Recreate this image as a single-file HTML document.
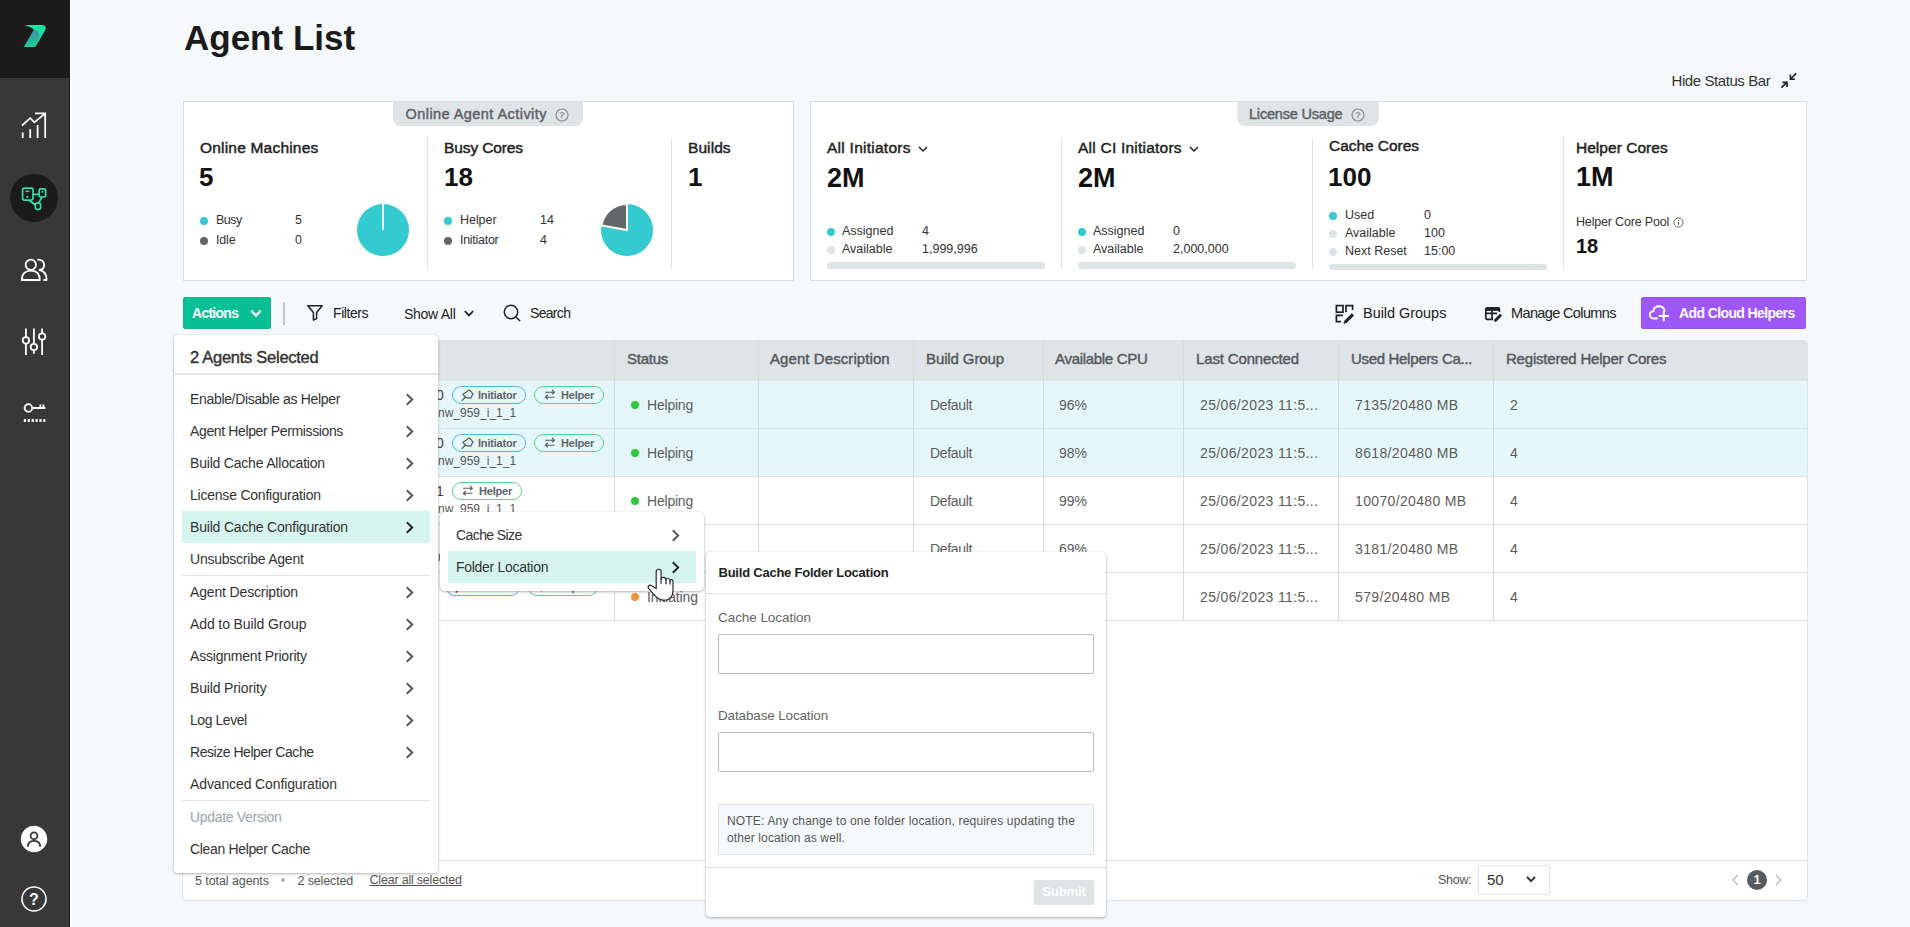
<!DOCTYPE html>
<html lang="en">
<head>
<meta charset="utf-8">
<title>Agent List</title>
<style>
*{box-sizing:border-box;margin:0;padding:0}
html,body{width:1910px;height:927px;overflow:hidden}
body{background:#f5f9fb;font-family:"Liberation Sans",sans-serif;color:#222;position:relative;font-size:14px}
.a{position:absolute}
.t{position:absolute;white-space:nowrap;line-height:20px;height:20px}
svg{display:block}
/* sidebar */
#side{left:0;top:0;width:70px;height:927px;background:#383838;border-right:1px solid #151515;box-shadow:1px 0 0 #fff}
#logo{left:0;top:0;width:70px;height:78px;background:#1b1b1b}
#active{left:10px;top:174px;width:48px;height:48px;border-radius:50%;background:#1b1b1b}
/* title */
#title{left:184px;top:15.5px;font-size:35px;font-weight:bold;line-height:44px;height:44px;color:#1a1a1a;letter-spacing:0}
/* panels */
.panel{position:absolute;background:#fff;border:1px solid #d9dfe3;top:101px;height:180px}
.tab{position:absolute;top:-1px;height:25px;background:#dfe4e7;border-radius:0 0 8px 8px;color:#5c6267;font-weight:normal;-webkit-text-stroke:.45px #5c6267;font-size:14.5px;line-height:26px;white-space:nowrap}
.vd{position:absolute;width:1px;background:#dde3e7;top:138px;height:131px}
.h1{font-size:15.5px;font-weight:normal;-webkit-text-stroke:.45px #222;color:#222}
.big{font-size:26px;font-weight:bold;color:#111;line-height:30px;height:30px}
.lg{font-size:12.5px;color:#333}
.dot{position:absolute;width:8px;height:8px;border-radius:50%}
.teal{background:#33cad0}.gray{background:#666}.lgray{background:#dfe4e7}
.bar{position:absolute;height:7px;border-radius:4px;background:#dfe4e7}

/* toolbar */
.tb{font-size:14px;color:#222}
#actions{left:183px;top:297px;width:88px;height:32px;background:#06bf94;border:1px solid #17b48c;border-radius:2px}
#cloud{left:1641px;top:297px;width:165px;height:32px;background:#9e58fa;border:1px solid #9256ec;border-radius:2px}
/* table */
#table{left:182px;top:340px;width:1626px;height:561px;background:#fff;border:1px solid #dde3e7;border-radius:4px}
#thead{left:183px;top:340px;width:1624px;height:41px;background:#dfe4e7;border-radius:3px 3px 0 0}
.th{font-size:15px;font-weight:normal;-webkit-text-stroke:.45px #565b5f;color:#565b5f;top:349px}
.row{position:absolute;left:183px;width:1624px;height:48px;border-bottom:1px solid #dde3e7}
.sel{background:#e6f7fb}
.cs{position:absolute;width:1px;top:340px;height:281px;background:#d5dce0}
.td{font-size:14px;color:#5c5c5c}
.pill{letter-spacing:-.2px;position:absolute;height:18px;border-radius:9px;border:1px solid;font-size:11px;font-weight:bold;color:#5e6469;line-height:16px;white-space:nowrap}
.pi{border-color:#58b4dd}.ph{border-color:#5dd489}
.sdot{position:absolute;width:8px;height:8px;border-radius:50%;background:#2bc93c}
.ft{font-size:12.5px;color:#555}

/* menus */
.pop{position:absolute;background:#fff;border-radius:4px;box-shadow:0 1px 3px rgba(0,0,0,.3),0 0 1px rgba(0,0,0,.1)}
.mi{font-size:14px;color:#333}
.hl{position:absolute;background:#d6f5ee}
.sep{position:absolute;height:1px;background:#dde3e7}
.inp{position:absolute;left:718px;width:376px;height:40px;border:1px solid #b9bec1;border-radius:2px;background:#fff}
</style>
</head>
<body>

<!-- ============ SIDEBAR ============ -->
<div id="side" class="a">
  <div id="logo" class="a"></div>
  <svg class="a" style="left:22px;top:22px" width="28" height="28" viewBox="0 0 28 28"><defs><linearGradient id="lg1" x1="0" y1="0" x2="0" y2="1"><stop offset="0" stop-color="#12e6a0"/><stop offset="1" stop-color="#1ec79a"/></linearGradient><linearGradient id="lg2" x1="0" y1="0" x2="0" y2="1"><stop offset="0" stop-color="#3f86a0" stop-opacity=".95"/><stop offset=".55" stop-color="#3a93a0" stop-opacity=".6"/><stop offset="1" stop-color="#22c79c" stop-opacity="0"/></linearGradient></defs><path d="M1.8 3 H19.6 C23.4 3 24.6 5.6 23.3 8 L13.4 24.9 H1.9 L12 7.8 C9.6 5.4 5.6 3.6 1.8 3 Z" fill="url(#lg1)"/><path d="M12 7.8 C14.6 8 16.8 10 17.6 12.8 L13.4 24.9 H1.9 Z" fill="url(#lg2)"/></svg>
  <!-- chart -->
  <svg class="a" style="left:20px;top:111px" width="28" height="28" viewBox="0 0 28 28"><path d="M2.7 27 V21.5 M10.2 27 V18.2 M17.6 27 V14 M25.2 27 V2.4 H15 M2 14.5 L10.2 7.2 L14.4 11.4 L25 2.6" fill="none" stroke="#fff" stroke-width="1.8"/></svg>
  <div id="active" class="a"></div>
  <!-- agents (active) -->
  <svg class="a" style="left:20px;top:186px" width="28" height="26" viewBox="0 0 28 26"><g fill="none" stroke="#2ee0a6" stroke-width="1.7" stroke-linejoin="round"><rect x="2.6" y="2.2" width="10.4" height="12" rx="1.6"/><rect x="19.2" y="2.8" width="6.4" height="8.2" rx="1.4"/><rect x="15.4" y="17.2" width="5.2" height="6.2" rx="1.3"/><path d="M13 8.4 H19.2 M9 14.2 L15.4 19 M22 11 L18.6 17.2"/><path d="M5.4 5.4 H9.4" stroke-width="1.4"/></g><rect x="6.4" y="10" width="1.8" height="1.8" fill="#2ee0a6"/><rect x="21.6" y="5" width="1.6" height="1.6" fill="#2ee0a6"/></svg>
  <!-- users -->
  <svg class="a" style="left:20px;top:257px" width="30" height="26" viewBox="0 0 30 26"><g fill="none" stroke="#fff" stroke-width="1.8" stroke-linejoin="round"><circle cx="10.8" cy="7.8" r="5.2"/><path d="M1.8 23 C1.8 16.6 5.6 13.6 10.8 13.6 C16 13.6 19.8 16.6 19.8 23 Z"/><path d="M17.4 2.8 C21.6 2.2 24.2 5 24.2 7.8 C24.2 10.4 22.4 12.6 19.6 13 C24 14 26.6 17.4 26.6 23 H23.4"/></g></svg>
  <!-- sliders -->
  <svg class="a" style="left:20px;top:327px" width="28" height="30" viewBox="0 0 28 30"><g fill="none" stroke="#fff" stroke-width="1.8"><path d="M5.9 1.5 V10.2 M5.9 16.6 V28 M13.9 1.5 V16.8 M13.9 23.2 V26.8 M22.1 1.5 V6.3 M22.1 12.7 V28"/><circle cx="5.9" cy="13.4" r="3.2"/><circle cx="13.9" cy="20" r="3.2"/><circle cx="22.1" cy="9.5" r="3.2"/></g></svg>
  <!-- key -->
  <svg class="a" style="left:22px;top:402px" width="26" height="22" viewBox="0 0 26 22"><g fill="none" stroke="#fff" stroke-width="1.8"><circle cx="6.4" cy="6" r="3.8"/><path d="M10.2 6 H23.4 M18.4 6 V2.6 M21.4 6 V2.6"/></g><path d="M1.8 18.4 H23.4" stroke="#fff" stroke-width="3" stroke-dasharray="2.2 1.7"/></svg>
  <!-- avatar -->
  <svg class="a" style="left:20px;top:825px" width="28" height="28" viewBox="0 0 28 28"><circle cx="14" cy="14" r="13.2" fill="#fff"/><g fill="none" stroke="#333" stroke-width="1.7"><circle cx="14" cy="10.8" r="3.4"/><path d="M7.8 21.8 C7.8 17.6 10.4 15.8 14 15.8 C17.6 15.8 20.2 17.6 20.2 21.8"/></g></svg>
  <!-- help -->
  <svg class="a" style="left:20px;top:885px" width="28" height="28" viewBox="0 0 28 28"><circle cx="14" cy="14" r="12" fill="none" stroke="#fff" stroke-width="1.6"/><text x="14" y="19.6" font-size="16" font-weight="bold" text-anchor="middle" fill="#fff" font-family="Liberation Sans, sans-serif">?</text></svg>
</div>

<!-- ============ TITLE ============ -->
<div id="title" class="t">Agent List</div>
<div class="t" style="left:1671.5px;top:71px;font-size:15px;color:#333;letter-spacing:-0.42px">Hide Status Bar</div>

<!-- ============ PANEL 1 ============ -->
<div class="panel" style="left:183px;width:611px"></div>
<div class="tab" style="left:393px;top:101px;width:190px;padding-left:12.5px;letter-spacing:0.44px">Online Agent Activity</div>
<svg class="a" style="left:555px;top:108px" width="14" height="14" viewBox="0 0 14 14"><circle cx="7" cy="7" r="6" fill="none" stroke="#8a9094" stroke-width="1.2"/><text x="7" y="10.2" font-size="9" font-weight="bold" text-anchor="middle" fill="#8a9094" font-family="Liberation Sans, sans-serif">?</text></svg>

<div class="t h1" style="left:200px;top:138px;letter-spacing:0.2px">Online Machines</div>
<div class="t big" style="left:199px;top:162px">5</div>
<div class="dot teal" style="left:200px;top:217px"></div>
<div class="t lg" style="left:216px;top:210px;letter-spacing:-0.5px">Busy</div>
<div class="t lg" style="left:295px;top:210px">5</div>
<div class="dot gray" style="left:200px;top:237px"></div>
<div class="t lg" style="left:216px;top:230px;letter-spacing:-0.16px">Idle</div>
<div class="t lg" style="left:295px;top:230px">0</div>
<svg class="a" style="left:356px;top:203px" width="54" height="54" viewBox="-27 -27 54 54"><circle r="26" fill="#33cad0"/><line x1="0" y1="0" x2="0" y2="-27" stroke="#fff" stroke-width="1.8"/></svg>
<div class="vd" style="left:427px"></div>

<div class="t h1" style="left:444px;top:138px;letter-spacing:-0.11px">Busy Cores</div>
<div class="t big" style="left:444px;top:162px">18</div>
<div class="dot teal" style="left:444px;top:217px"></div>
<div class="t lg" style="left:460px;top:210px;letter-spacing:-0.05px">Helper</div>
<div class="t lg" style="left:540px;top:210px">14</div>
<div class="dot gray" style="left:444px;top:237px"></div>
<div class="t lg" style="left:460px;top:230px;letter-spacing:-0.28px">Initiator</div>
<div class="t lg" style="left:540px;top:230px">4</div>
<svg class="a" style="left:600px;top:203px" width="54" height="54" viewBox="-27 -27 54 54"><circle r="26" fill="#33cad0"/><path d="M0 0 L0 -26 A26 26 0 0 0 -25.6 -4.6 Z" fill="#62676a" stroke="#fff" stroke-width="2" stroke-linejoin="miter"/></svg>
<div class="vd" style="left:671px"></div>

<div class="t h1" style="left:688px;top:138px;letter-spacing:0.08px">Builds</div>
<div class="t big" style="left:688px;top:162px">1</div>

<!-- ============ PANEL 2 ============ -->
<div class="panel" style="left:810px;width:997px"></div>
<div class="tab" style="left:1237px;top:101px;width:142px;padding-left:12px;letter-spacing:-0.19px">License Usage</div>
<svg class="a" style="left:1351px;top:108px" width="14" height="14" viewBox="0 0 14 14"><circle cx="7" cy="7" r="6" fill="none" stroke="#8a9094" stroke-width="1.2"/><text x="7" y="10.2" font-size="9" font-weight="bold" text-anchor="middle" fill="#8a9094" font-family="Liberation Sans, sans-serif">?</text></svg>

<div class="t h1" style="left:827px;top:138px;letter-spacing:0.26px">All Initiators</div>
<svg class="a" style="left:918px;top:145px" width="10" height="8" viewBox="0 0 10 8"><path d="M1 2 L5 6 L9 2" fill="none" stroke="#222" stroke-width="1.5"/></svg>
<div class="t big" style="left:827px;top:163px;font-size:27px">2M</div>
<div class="dot teal" style="left:827px;top:228px"></div>
<div class="t lg" style="left:842px;top:221px">Assigned</div>
<div class="t lg" style="left:922px;top:221px">4</div>
<div class="dot lgray" style="left:827px;top:246px"></div>
<div class="t lg" style="left:842px;top:239px">Available</div>
<div class="t lg" style="left:922px;top:239px">1,999,996</div>
<div class="bar" style="left:827px;top:262px;width:218px"></div>
<div class="vd" style="left:1061px"></div>

<div class="t h1" style="left:1078px;top:138px;letter-spacing:0.23px">All CI Initiators</div>
<svg class="a" style="left:1189px;top:145px" width="10" height="8" viewBox="0 0 10 8"><path d="M1 2 L5 6 L9 2" fill="none" stroke="#222" stroke-width="1.5"/></svg>
<div class="t big" style="left:1078px;top:163px;font-size:27px">2M</div>
<div class="dot teal" style="left:1078px;top:228px"></div>
<div class="t lg" style="left:1093px;top:221px">Assigned</div>
<div class="t lg" style="left:1173px;top:221px">0</div>
<div class="dot lgray" style="left:1078px;top:246px"></div>
<div class="t lg" style="left:1093px;top:239px">Available</div>
<div class="t lg" style="left:1173px;top:239px">2,000,000</div>
<div class="bar" style="left:1078px;top:262px;width:218px"></div>
<div class="vd" style="left:1312px"></div>

<div class="t h1" style="left:1329px;top:136px;letter-spacing:-0.04px">Cache Cores</div>
<div class="t big" style="left:1328px;top:162px">100</div>
<div class="dot teal" style="left:1329px;top:212px"></div>
<div class="t lg" style="left:1345px;top:205px">Used</div>
<div class="t lg" style="left:1424px;top:205px">0</div>
<div class="dot lgray" style="left:1329px;top:230px"></div>
<div class="t lg" style="left:1345px;top:223px">Available</div>
<div class="t lg" style="left:1424px;top:223px">100</div>
<div class="dot lgray" style="left:1329px;top:248px"></div>
<div class="t lg" style="left:1345px;top:241px">Next Reset</div>
<div class="t lg" style="left:1424px;top:241px">15:00</div>
<div class="bar" style="left:1329px;top:264px;width:218px;height:6px"></div>
<div class="vd" style="left:1563px"></div>

<div class="t h1" style="left:1576px;top:138px;letter-spacing:0.03px">Helper Cores</div>
<div class="t big" style="left:1576px;top:162px;font-size:27px">1M</div>
<div class="t" style="left:1576px;top:212px;font-size:12.5px;color:#333;letter-spacing:-0.17px">Helper Core Pool</div>
<svg class="a" style="left:1673px;top:217px" width="11" height="11" viewBox="0 0 11 11"><circle cx="5.5" cy="5.5" r="4.6" fill="none" stroke="#555" stroke-width="0.9"/><line x1="5.5" y1="4.8" x2="5.5" y2="8" stroke="#555" stroke-width="1"/><circle cx="5.5" cy="3.3" r=".6" fill="#555"/></svg>
<div class="t" style="left:1576px;top:234px;font-size:20px;font-weight:bold;line-height:24px;height:24px;color:#111">18</div>

<!-- ============ TOOLBAR ============ -->
<div id="actions" class="a"></div>
<div class="t" style="left:192px;top:303px;font-size:14px;font-weight:bold;color:#fff;letter-spacing:-0.73px">Actions</div>
<svg class="a" style="left:249px;top:308px" width="14" height="11" viewBox="0 0 14 11"><path d="M2.2 2.6 L7 7.6 L11.8 2.6" fill="none" stroke="#fff" stroke-width="2.3"/></svg>
<div class="a" style="left:283px;top:302px;width:2px;height:23px;background:#c3c8cb"></div>
<svg class="a" style="left:306px;top:304px" width="18" height="18" viewBox="0 0 18 18"><path d="M1.8 1.8 H16.2 L10.6 8.6 V14.6 L7.4 16 V8.6 Z" fill="none" stroke="#222" stroke-width="1.5" stroke-linejoin="round"/></svg>
<div class="t tb" style="left:333px;top:303px;letter-spacing:-0.42px">Filters</div>
<div class="t tb" style="left:404px;top:304px;letter-spacing:-0.28px">Show All</div>
<svg class="a" style="left:463px;top:309px" width="12" height="9" viewBox="0 0 12 9"><path d="M1.8 2 L6 6.4 L10.2 2" fill="none" stroke="#222" stroke-width="1.8"/></svg>
<svg class="a" style="left:502px;top:303px" width="20" height="20" viewBox="0 0 20 20"><circle cx="9" cy="9" r="6.7" fill="none" stroke="#222" stroke-width="1.5"/><line x1="13.8" y1="13.8" x2="18" y2="18" stroke="#222" stroke-width="1.6"/></svg>
<div class="t tb" style="left:530px;top:303px;letter-spacing:-0.68px">Search</div>

<div class="t tb" style="left:1363px;top:303px;font-size:14.5px;letter-spacing:-0.04px">Build Groups</div>
<div class="t tb" style="left:1511px;top:303px;font-size:14.5px;letter-spacing:-0.63px">Manage Columns</div>
<div id="cloud" class="a"></div>
<svg class="a" style="left:1334px;top:303px" width="22" height="22" viewBox="0 0 22 22"><g fill="none" stroke="#222" stroke-width="1.7"><rect x="2.4" y="2.6" width="6.6" height="6.6"/><path d="M12 9.2 V2.6 H18.6 V7"/><path d="M9 12.4 H2.4 V18.6 H7"/></g><path d="M11.2 19.2 L19 11.4" stroke="#222" stroke-width="3.2" stroke-linecap="butt"/><path d="M10 20.4 L11.6 18.8" stroke="#222" stroke-width="2"/></svg>
<svg class="a" style="left:1484px;top:305px" width="20" height="19" viewBox="0 0 20 19"><g fill="none" stroke="#222" stroke-width="1.7" stroke-linejoin="round"><path d="M15.4 7 V4.2 C15.4 3.4 14.8 2.8 14 2.8 H3.2 C2.4 2.8 1.8 3.4 1.8 4.2 V13 C1.8 13.8 2.4 14.4 3.2 14.4 H9"/><path d="M1.8 8.4 H13 M8 5 V14.4"/></g><path d="M1.8 4.4 H15.4" stroke="#222" stroke-width="3"/><path d="M10.6 16.2 L17 9.8" stroke="#222" stroke-width="2.8"/></svg>
<svg class="a" style="left:1647px;top:303px" width="24" height="20" viewBox="0 0 24 20"><g fill="none" stroke="#fff" stroke-width="2" stroke-linecap="round" stroke-linejoin="round"><path d="M10 15.4 H6.6 C4.4 15.4 2.8 13.8 2.8 11.8 C2.8 9.8 4.4 8.2 6.4 8.2 C6.8 5.2 9.2 3.2 12 3.2 C14.8 3.2 17 5 17.6 7.6"/><path d="M16.8 8.6 V17.4 M12.4 13 H21.2"/></g></svg>
<svg class="a" style="left:1780px;top:72px" width="18" height="18" viewBox="0 0 18 18"><g fill="none" stroke="#222" stroke-width="1.6"><path d="M16.2 1.4 L10.4 7.2 M10.4 2.6 V7.2 H15"/><path d="M1.4 15.6 L7 10.4 M2.4 10.4 H7 V15"/></g></svg>

<div class="t" style="left:1679px;top:303px;font-size:14px;font-weight:bold;color:#fff;letter-spacing:-0.61px">Add Cloud Helpers</div>

<!-- ============ TABLE ============ -->
<div id="table" class="a"></div>
<div id="thead" class="a"></div>
<div class="row sel" style="top:381px"></div>
<div class="row sel" style="top:429px"></div>
<div class="row" style="top:477px"></div>
<div class="row" style="top:525px"></div>
<div class="row" style="top:573px"></div>
<div class="cs" style="left:614px"></div>
<div class="cs" style="left:758px"></div>
<div class="cs" style="left:913px"></div>
<div class="cs" style="left:1043px"></div>
<div class="cs" style="left:1183px"></div>
<div class="cs" style="left:1338px"></div>
<div class="cs" style="left:1493px"></div>
<div class="t th" style="left:627px;letter-spacing:-0.26px">Status</div>
<div class="t th" style="left:770px;letter-spacing:0.08px">Agent Description</div>
<div class="t th" style="left:926px;letter-spacing:-0.11px">Build Group</div>
<div class="t th" style="left:1055px;letter-spacing:-0.3px">Available CPU</div>
<div class="t th" style="left:1196px;letter-spacing:-0.15px">Last Connected</div>
<div class="t th" style="left:1351px;letter-spacing:-0.32px">Used Helpers Ca...</div>
<div class="t th" style="left:1506px;letter-spacing:-0.21px">Registered Helper Cores</div>

<!-- row 381 -->
<div class="t td" style="left:436px;top:385px;font-size:14px;color:#444">0</div>
<div class="pill pi" style="left:452px;top:386px;width:74px;padding-left:25px"><svg class="a" style="left:8px;top:2px" width="13" height="13" viewBox="0 0 13 13"><path d="M8.4 0.9 L12 4.8 L9.7 9.2 L4.5 8.6 L1.9 5.2 Z M4.6 8 L1.2 11.3" fill="none" stroke="#565b5f" stroke-width="1.25" stroke-linejoin="round" stroke-linecap="round"/></svg>Initiator</div>
<div class="pill ph" style="left:534px;top:386px;width:70px;padding-left:26px"><svg class="a" style="left:9px;top:2px" width="12" height="12" viewBox="0 0 12 12"><path d="M1.2 3.2 H10.2 M8 1 L10.4 3.2 L8 5.4 M10.4 8.2 H1.4 M3.8 6 L1.4 8.2 L3.8 10.4" fill="none" stroke="#565b5f" stroke-width="1.15"/></svg>Helper</div>
<div class="t td" style="left:438px;top:403px;font-size:12px;color:#555">nw_959_i_1_1</div>
<div class="sdot" style="left:631px;top:401px;background:#2bc93c"></div>
<div class="t td" style="left:647px;top:395px;letter-spacing:-0.21px">Helping</div>
<div class="t td" style="left:930px;top:395px;letter-spacing:-0.31px">Default</div>
<div class="t td" style="left:1059px;top:395px">96%</div>
<div class="t td" style="left:1200px;top:395px;letter-spacing:0.36px">25/06/2023 11:5...</div>
<div class="t td" style="left:1355px;top:395px;letter-spacing:0.36px">7135/20480 MB</div>
<div class="t td" style="left:1510px;top:395px">2</div>

<!-- row 429 -->
<div class="t td" style="left:436px;top:433px;font-size:14px;color:#444">0</div>
<div class="pill pi" style="left:452px;top:434px;width:74px;padding-left:25px"><svg class="a" style="left:8px;top:2px" width="13" height="13" viewBox="0 0 13 13"><path d="M8.4 0.9 L12 4.8 L9.7 9.2 L4.5 8.6 L1.9 5.2 Z M4.6 8 L1.2 11.3" fill="none" stroke="#565b5f" stroke-width="1.25" stroke-linejoin="round" stroke-linecap="round"/></svg>Initiator</div>
<div class="pill ph" style="left:534px;top:434px;width:70px;padding-left:26px"><svg class="a" style="left:9px;top:2px" width="12" height="12" viewBox="0 0 12 12"><path d="M1.2 3.2 H10.2 M8 1 L10.4 3.2 L8 5.4 M10.4 8.2 H1.4 M3.8 6 L1.4 8.2 L3.8 10.4" fill="none" stroke="#565b5f" stroke-width="1.15"/></svg>Helper</div>
<div class="t td" style="left:438px;top:451px;font-size:12px;color:#555">nw_959_i_1_1</div>
<div class="sdot" style="left:631px;top:449px;background:#2bc93c"></div>
<div class="t td" style="left:647px;top:443px;letter-spacing:-0.21px">Helping</div>
<div class="t td" style="left:930px;top:443px;letter-spacing:-0.31px">Default</div>
<div class="t td" style="left:1059px;top:443px">98%</div>
<div class="t td" style="left:1200px;top:443px;letter-spacing:0.36px">25/06/2023 11:5...</div>
<div class="t td" style="left:1355px;top:443px;letter-spacing:0.36px">8618/20480 MB</div>
<div class="t td" style="left:1510px;top:443px">4</div>

<!-- row 477 -->
<div class="t td" style="left:436px;top:481px;font-size:14px;color:#444">1</div>
<div class="pill ph" style="left:452px;top:482px;width:70px;padding-left:26px"><svg class="a" style="left:9px;top:2px" width="12" height="12" viewBox="0 0 12 12"><path d="M1.2 3.2 H10.2 M8 1 L10.4 3.2 L8 5.4 M10.4 8.2 H1.4 M3.8 6 L1.4 8.2 L3.8 10.4" fill="none" stroke="#565b5f" stroke-width="1.15"/></svg>Helper</div>
<div class="t td" style="left:438px;top:499px;font-size:12px;color:#555">nw_959_i_1_1</div>
<div class="sdot" style="left:631px;top:497px;background:#2bc93c"></div>
<div class="t td" style="left:647px;top:491px;letter-spacing:-0.21px">Helping</div>
<div class="t td" style="left:930px;top:491px;letter-spacing:-0.31px">Default</div>
<div class="t td" style="left:1059px;top:491px">99%</div>
<div class="t td" style="left:1200px;top:491px;letter-spacing:0.36px">25/06/2023 11:5...</div>
<div class="t td" style="left:1355px;top:491px;letter-spacing:0.35px">10070/20480 MB</div>
<div class="t td" style="left:1510px;top:491px">4</div>

<!-- row 525 -->
<div class="pill pi" style="left:452px;top:530px;width:74px;padding-left:25px"><svg class="a" style="left:8px;top:2px" width="13" height="13" viewBox="0 0 13 13"><path d="M8.4 0.9 L12 4.8 L9.7 9.2 L4.5 8.6 L1.9 5.2 Z M4.6 8 L1.2 11.3" fill="none" stroke="#565b5f" stroke-width="1.25" stroke-linejoin="round" stroke-linecap="round"/></svg>Initiator</div>
<div class="pill ph" style="left:534px;top:530px;width:70px;padding-left:26px"><svg class="a" style="left:9px;top:2px" width="12" height="12" viewBox="0 0 12 12"><path d="M1.2 3.2 H10.2 M8 1 L10.4 3.2 L8 5.4 M10.4 8.2 H1.4 M3.8 6 L1.4 8.2 L3.8 10.4" fill="none" stroke="#565b5f" stroke-width="1.15"/></svg>Helper</div>
<div class="t td" style="left:438px;top:547px;font-size:12px;color:#555">nw_959_i_1_1</div>
<div class="sdot" style="left:631px;top:545px;background:#2bc93c"></div>
<div class="t td" style="left:647px;top:539px;letter-spacing:-0.21px">Helping</div>
<div class="t td" style="left:930px;top:539px;letter-spacing:-0.31px">Default</div>
<div class="t td" style="left:1059px;top:539px">69%</div>
<div class="t td" style="left:1200px;top:539px;letter-spacing:0.36px">25/06/2023 11:5...</div>
<div class="t td" style="left:1355px;top:539px;letter-spacing:0.36px">3181/20480 MB</div>
<div class="t td" style="left:1510px;top:539px">4</div>

<!-- row 573 -->
<div class="pill pi" style="left:446px;top:578px;width:74px;padding-left:25px"><svg class="a" style="left:8px;top:2px" width="13" height="13" viewBox="0 0 13 13"><path d="M8.4 0.9 L12 4.8 L9.7 9.2 L4.5 8.6 L1.9 5.2 Z M4.6 8 L1.2 11.3" fill="none" stroke="#565b5f" stroke-width="1.25" stroke-linejoin="round" stroke-linecap="round"/></svg>Initiator</div>
<div class="pill ph" style="left:528px;top:578px;width:70px;padding-left:26px"><svg class="a" style="left:9px;top:2px" width="12" height="12" viewBox="0 0 12 12"><path d="M1.2 3.2 H10.2 M8 1 L10.4 3.2 L8 5.4 M10.4 8.2 H1.4 M3.8 6 L1.4 8.2 L3.8 10.4" fill="none" stroke="#565b5f" stroke-width="1.15"/></svg>Helper</div>
<div class="sdot" style="left:631px;top:593px;background:#f5923e"></div>
<div class="t td" style="left:647px;top:587px;letter-spacing:-0.12px">Initiating</div>
<div class="t td" style="left:930px;top:587px;letter-spacing:-0.31px">Default</div>
<div class="t td" style="left:1059px;top:587px">100%</div>
<div class="t td" style="left:1200px;top:587px;letter-spacing:0.36px">25/06/2023 11:5...</div>
<div class="t td" style="left:1355px;top:587px;letter-spacing:0.36px">579/20480 MB</div>
<div class="t td" style="left:1510px;top:587px">4</div>

<!-- footer -->
<div class="a" style="left:183px;top:860px;width:1624px;height:1px;background:#dde3e7"></div>
<div class="t ft" style="left:195px;top:871px;letter-spacing:-0.08px">5 total agents</div>
<div class="a" style="left:281px;top:878px;width:4px;height:4px;border-radius:50%;background:#aab0b4"></div>
<div class="t ft" style="left:297.5px;top:871px;letter-spacing:-0.14px">2 selected</div>
<div class="t ft" style="left:369.5px;top:870px;text-decoration:underline;letter-spacing:-0.2px">Clear all selected</div>
<div class="t ft" style="left:1438px;top:870px;letter-spacing:-0.25px">Show:</div>
<div class="a" style="left:1478px;top:865px;width:72px;height:30px;border:1px solid #dde3e7;border-radius:3px;background:#fff"></div>
<div class="t" style="left:1487px;top:870px;font-size:15px;color:#333">50</div>
<svg class="a" style="left:1525px;top:875px" width="12" height="9" viewBox="0 0 12 9"><path d="M2 2 L6 6.2 L10 2" fill="none" stroke="#333" stroke-width="1.9"/></svg>
<svg class="a" style="left:1731px;top:874px" width="9" height="12" viewBox="0 0 9 12"><path d="M7 1 L2 6 L7 11" fill="none" stroke="#b4babd" stroke-width="1.3"/></svg>
<div class="a" style="left:1747px;top:870px;width:20px;height:20px;border-radius:50%;background:#565b5f"></div>
<div class="t" style="left:1747px;top:870px;width:20px;text-align:center;font-size:13px;font-weight:bold;color:#fff">1</div>
<svg class="a" style="left:1774px;top:874px" width="9" height="12" viewBox="0 0 9 12"><path d="M2 1 L7 6 L2 11" fill="none" stroke="#b4babd" stroke-width="1.3"/></svg>

<!-- ============ ACTIONS MENU ============ -->
<div class="pop" style="left:174px;top:335px;width:264px;height:538px"></div>
<div class="t" style="left:190px;top:347px;font-size:16.5px;font-weight:normal;-webkit-text-stroke:.4px #333;color:#333;letter-spacing:-0.27px">2 Agents Selected</div>
<div class="sep" style="left:174px;top:373px;width:264px;height:2px;background:#dfe4e7"></div>
<div class="hl" style="left:182px;top:511px;width:248px;height:32px"></div>
<div class="sep" style="left:182px;top:575px;width:248px"></div>
<div class="sep" style="left:182px;top:800px;width:248px"></div>
<div class="t mi" style="left:190px;top:389px;color:#333;letter-spacing:-0.33px">Enable/Disable as Helper</div>
<svg class="a" style="left:405px;top:393px" width="9" height="13" viewBox="0 0 9 13"><path d="M1.8 1.2 L7.2 6.5 L1.8 11.8" fill="none" stroke="#555" stroke-width="1.9"/></svg>
<div class="t mi" style="left:190px;top:421px;color:#333;letter-spacing:-0.37px">Agent Helper Permissions</div>
<svg class="a" style="left:405px;top:425px" width="9" height="13" viewBox="0 0 9 13"><path d="M1.8 1.2 L7.2 6.5 L1.8 11.8" fill="none" stroke="#555" stroke-width="1.9"/></svg>
<div class="t mi" style="left:190px;top:453px;color:#333;letter-spacing:-0.2px">Build Cache Allocation</div>
<svg class="a" style="left:405px;top:457px" width="9" height="13" viewBox="0 0 9 13"><path d="M1.8 1.2 L7.2 6.5 L1.8 11.8" fill="none" stroke="#555" stroke-width="1.9"/></svg>
<div class="t mi" style="left:190px;top:485px;color:#333;letter-spacing:-0.22px">License Configuration</div>
<svg class="a" style="left:405px;top:489px" width="9" height="13" viewBox="0 0 9 13"><path d="M1.8 1.2 L7.2 6.5 L1.8 11.8" fill="none" stroke="#555" stroke-width="1.9"/></svg>
<div class="t mi" style="left:190px;top:517px;color:#333;letter-spacing:-0.19px">Build Cache Configuration</div>
<svg class="a" style="left:405px;top:521px" width="9" height="13" viewBox="0 0 9 13"><path d="M1.8 1.2 L7.2 6.5 L1.8 11.8" fill="none" stroke="#222" stroke-width="1.9"/></svg>
<div class="t mi" style="left:190px;top:549px;color:#333;letter-spacing:-0.23px">Unsubscribe Agent</div>
<div class="t mi" style="left:190px;top:582px;color:#333;letter-spacing:-0.15px">Agent Description</div>
<svg class="a" style="left:405px;top:586px" width="9" height="13" viewBox="0 0 9 13"><path d="M1.8 1.2 L7.2 6.5 L1.8 11.8" fill="none" stroke="#555" stroke-width="1.9"/></svg>
<div class="t mi" style="left:190px;top:614px;color:#333;letter-spacing:-0.11px">Add to Build Group</div>
<svg class="a" style="left:405px;top:618px" width="9" height="13" viewBox="0 0 9 13"><path d="M1.8 1.2 L7.2 6.5 L1.8 11.8" fill="none" stroke="#555" stroke-width="1.9"/></svg>
<div class="t mi" style="left:190px;top:646px;color:#333;letter-spacing:-0.2px">Assignment Priority</div>
<svg class="a" style="left:405px;top:650px" width="9" height="13" viewBox="0 0 9 13"><path d="M1.8 1.2 L7.2 6.5 L1.8 11.8" fill="none" stroke="#555" stroke-width="1.9"/></svg>
<div class="t mi" style="left:190px;top:678px;color:#333;letter-spacing:-0.15px">Build Priority</div>
<svg class="a" style="left:405px;top:682px" width="9" height="13" viewBox="0 0 9 13"><path d="M1.8 1.2 L7.2 6.5 L1.8 11.8" fill="none" stroke="#555" stroke-width="1.9"/></svg>
<div class="t mi" style="left:190px;top:710px;color:#333;letter-spacing:-0.44px">Log Level</div>
<svg class="a" style="left:405px;top:714px" width="9" height="13" viewBox="0 0 9 13"><path d="M1.8 1.2 L7.2 6.5 L1.8 11.8" fill="none" stroke="#555" stroke-width="1.9"/></svg>
<div class="t mi" style="left:190px;top:742px;color:#333;letter-spacing:-0.46px">Resize Helper Cache</div>
<svg class="a" style="left:405px;top:746px" width="9" height="13" viewBox="0 0 9 13"><path d="M1.8 1.2 L7.2 6.5 L1.8 11.8" fill="none" stroke="#555" stroke-width="1.9"/></svg>
<div class="t mi" style="left:190px;top:774px;color:#333;letter-spacing:-0.12px">Advanced Configuration</div>
<div class="t mi" style="left:190px;top:807px;color:#9aa5a8;letter-spacing:-0.31px">Update Version</div>
<div class="t mi" style="left:190px;top:839px;color:#333;letter-spacing:-0.34px">Clean Helper Cache</div>

<!-- ============ SUBMENU ============ -->
<div class="pop" style="left:440px;top:512px;width:264px;height:79px;border-radius:5px"></div>
<div class="hl" style="left:448px;top:551px;width:248px;height:32px"></div>
<div class="t mi" style="left:456px;top:525px;letter-spacing:-0.59px">Cache Size</div>
<div class="t mi" style="left:456px;top:557px;letter-spacing:-0.29px">Folder Location</div>
<svg class="a" style="left:671px;top:529px" width="9" height="13" viewBox="0 0 9 13"><path d="M1.8 1.2 L7.2 6.5 L1.8 11.8" fill="none" stroke="#555" stroke-width="1.9"/></svg>
<svg class="a" style="left:671px;top:561px" width="9" height="13" viewBox="0 0 9 13"><path d="M1.8 1.2 L7.2 6.5 L1.8 11.8" fill="none" stroke="#222" stroke-width="1.9"/></svg>

<!-- ============ FOLDER PANEL ============ -->
<div class="pop" style="left:706px;top:552px;width:400px;height:365px"></div>
<div class="t" style="left:718.5px;top:563px;font-size:13px;font-weight:bold;color:#222;letter-spacing:-0.23px">Build Cache Folder Location</div>
<div class="sep" style="left:706px;top:593px;width:400px"></div>
<div class="t" style="left:718px;top:608px;font-size:13.5px;color:#666;letter-spacing:-0.06px">Cache Location</div>
<div class="inp" style="top:634px"></div>
<div class="t" style="left:718px;top:706px;font-size:13.5px;color:#666;letter-spacing:-0.15px">Database Location</div>
<div class="inp" style="top:732px"></div>
<div class="a" style="left:718px;top:804px;width:376px;height:51px;background:#f5f9fb;border:1px solid #dde3e7"></div>
<div class="t" style="left:727px;top:811px;font-size:12px;color:#555;letter-spacing:0.18px">NOTE: Any change to one folder location, requires updating the</div>
<div class="t" style="left:727px;top:828px;font-size:12px;color:#555;letter-spacing:0.11px">other location as well.</div>
<div class="sep" style="left:706px;top:867px;width:400px"></div>
<div class="a" style="left:1034px;top:880px;width:60px;height:25px;background:#dfe4e7;border-radius:2px"></div>
<div class="t" style="left:1034px;top:882px;width:60px;text-align:center;font-size:13px;font-weight:bold;color:#fff;letter-spacing:-0.11px">Submit</div>

<!-- cursor -->
<svg class="a" style="left:647px;top:568px" width="28" height="34" viewBox="0 0 28 34"><path d="M9.2 20.6 V3.6 C9.2 0.5 14.1 0.5 14.1 3.6 V11.2 C14.1 8.7 19 8.8 19 11.4 V12.2 C19 9.8 23 10 23 12.4 V13.2 C23 11 26 11.2 26 13.6 V23 C26 29 22 32.2 17 32.2 C12 32.2 9.6 29.6 7 26.6 L1.8 20.6 C0 18.4 2.6 16.2 4.8 17.8 L9.2 20.6 Z" fill="#fff" stroke="#1c2426" stroke-width="1.15" stroke-linejoin="round"/><path d="M14.1 11 V15.8 M19 12 V16.2 M23 13 V16.4" stroke="#1c2426" stroke-width="1.2" fill="none"/></svg>

</body>
</html>
